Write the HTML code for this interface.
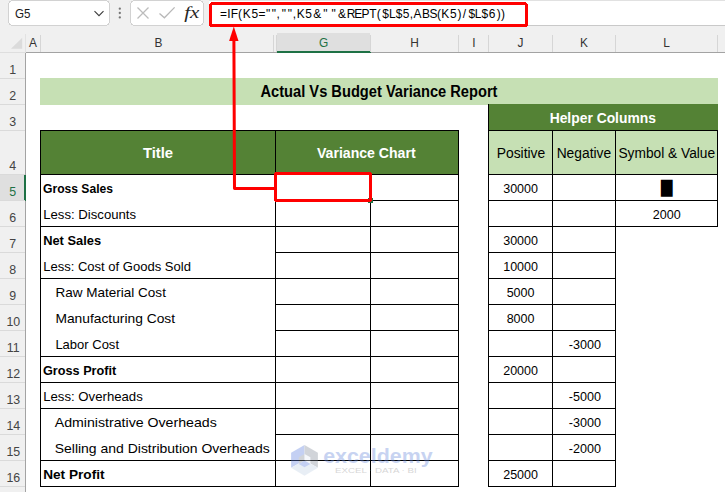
<!DOCTYPE html>
<html lang="en">
<head>
<meta charset="utf-8">
<title>Actual Vs Budget Variance Report</title>
<style>
html,body{margin:0;padding:0;background:#fff;}
body{width:725px;height:492px;overflow:hidden;}
svg{display:block;font-family:"Liberation Sans", sans-serif;}
svg rect{shape-rendering:crispEdges;}
svg text{white-space:pre;}
</style>
</head>
<body>
<svg width="725" height="492" viewBox="0 0 725 492">
<rect x="0" y="0" width="725" height="492" fill="#ffffff" />
<rect x="0" y="0" width="725" height="53" fill="#f0f0f0" />
<rect x="209" y="1" width="516" height="24" fill="#ffffff" />
<rect x="209" y="0" width="516" height="1" fill="#e1e1e1" />
<rect x="209" y="25" width="516" height="1" fill="#c9c9c9" />
<rect x="8.5" y="0.5" width="101" height="25" rx="4.5" fill="#fff" stroke="#d2d2d2"/>
<rect x="130.5" y="0.5" width="73" height="25" rx="4.5" fill="#fff" stroke="#d2d2d2"/>
<text x="15" y="18" font-size="12.2" font-weight="normal" fill="#1a1a1a" text-anchor="start" textLength="15.5" lengthAdjust="spacingAndGlyphs" >G5</text>
<path d="M94.5 11.2 L99 15.7 L103.5 11.2" fill="none" stroke="#3b3b3b" stroke-width="1.1"/>
<circle cx="119.8" cy="8.7" r="1.15" fill="#767676"/>
<circle cx="119.8" cy="13.0" r="1.15" fill="#767676"/>
<circle cx="119.8" cy="17.4" r="1.15" fill="#767676"/>
<path d="M137.5 7.5 L148.5 18.5 M148.5 7.5 L137.5 18.5" fill="none" stroke="#bcbcbc" stroke-width="1.3"/>
<path d="M159.5 13.4 L164.4 17.8 L174.6 7.4" fill="none" stroke="#b8b8b8" stroke-width="1.3"/>
<text x="184.2" y="17.9" font-size="16.5" font-weight="normal" fill="#262626" text-anchor="start" textLength="15.2" lengthAdjust="spacingAndGlyphs" font-family='"Liberation Serif", serif' font-style="italic">fx</text>
<text transform="scale(0.92,1)" x="239.2 246.94 250.84 258.83 263.79 273.25 280.99 289.05 295.41 300.64 306.23 312.75 318.3 322.65 331.72 340.54 351.23 355.43 360.41 367.44 376.92 385.08 392.87 401.25 409.48 415.55 422.81 430.12 437.81 445.42 449.41 458.68 466.75 474.97 479.66 489.06 497.39 503.09 509.14 516.12 523.38 531.12 539.83 544.56" y="18" font-size="13" fill="#000">=IF(K5=&quot;&quot;,&quot;&quot;,K5&amp;&quot; &quot;&amp;REPT($L$5,ABS(K5)/$L$6))</text>
<rect x="277" y="33" width="93" height="18" fill="#dfdfdf" />
<rect x="277" y="51" width="94" height="2" fill="#1e7145" />
<text x="33.0" y="47" font-size="11.9" font-weight="normal" fill="#333" text-anchor="middle" >A</text>
<text x="158.4" y="47" font-size="11.9" font-weight="normal" fill="#333" text-anchor="middle" >B</text>
<text x="323.5" y="47" font-size="11.9" font-weight="normal" fill="#1e7145" text-anchor="middle" >G</text>
<text x="414.5" y="47" font-size="11.9" font-weight="normal" fill="#333" text-anchor="middle" >H</text>
<text x="474.0" y="47" font-size="11.9" font-weight="normal" fill="#333" text-anchor="middle" >I</text>
<text x="520.5" y="47" font-size="11.9" font-weight="normal" fill="#333" text-anchor="middle" >J</text>
<text x="584.0" y="47" font-size="11.9" font-weight="normal" fill="#333" text-anchor="middle" >K</text>
<text x="666.5" y="47" font-size="11.9" font-weight="normal" fill="#333" text-anchor="middle" >L</text>
<rect x="40" y="35" width="1" height="17" fill="#d6d6d6" />
<rect x="273" y="35" width="1" height="17" fill="#d6d6d6" />
<rect x="276" y="35" width="1" height="17" fill="#d6d6d6" />
<rect x="370" y="35" width="1" height="17" fill="#d6d6d6" />
<rect x="458" y="35" width="1" height="17" fill="#d6d6d6" />
<rect x="488" y="35" width="1" height="17" fill="#d6d6d6" />
<rect x="552" y="35" width="1" height="17" fill="#d6d6d6" />
<rect x="615" y="35" width="1" height="17" fill="#d6d6d6" />
<rect x="717" y="35" width="1" height="17" fill="#d6d6d6" />
<rect x="25" y="34" width="1" height="18" fill="#e2e2e2" />
<rect x="0" y="52" width="26" height="1" fill="#dedede" />
<rect x="26" y="52" width="251" height="1" fill="#a3a3a3" />
<rect x="371" y="52" width="354" height="1" fill="#a3a3a3" />
<rect x="0" y="53" width="26" height="439" fill="#f0f0f0" />
<rect x="0" y="175" width="24" height="25" fill="#dfdfdf" />
<rect x="24" y="175" width="2" height="26" fill="#1e7145" />
<rect x="0" y="78" width="25" height="1" fill="#dadada" />
<rect x="0" y="104" width="25" height="1" fill="#dadada" />
<rect x="0" y="130" width="25" height="1" fill="#dadada" />
<rect x="0" y="174" width="25" height="1" fill="#dadada" />
<rect x="0" y="200" width="25" height="1" fill="#dadada" />
<rect x="0" y="226" width="25" height="1" fill="#dadada" />
<rect x="0" y="252" width="25" height="1" fill="#dadada" />
<rect x="0" y="278" width="25" height="1" fill="#dadada" />
<rect x="0" y="304" width="25" height="1" fill="#dadada" />
<rect x="0" y="330" width="25" height="1" fill="#dadada" />
<rect x="0" y="356" width="25" height="1" fill="#dadada" />
<rect x="0" y="382" width="25" height="1" fill="#dadada" />
<rect x="0" y="408" width="25" height="1" fill="#dadada" />
<rect x="0" y="434" width="25" height="1" fill="#dadada" />
<rect x="0" y="460" width="25" height="1" fill="#dadada" />
<rect x="0" y="486" width="25" height="1" fill="#dadada" />
<rect x="25" y="53" width="1" height="122" fill="#a3a3a3" />
<rect x="25" y="201" width="1" height="291" fill="#a3a3a3" />
<path d="M22.2 37.8 L22.2 48.7 L11 48.7 Z" fill="#dbdbdb"/>
<text x="12.7" y="73.5" font-size="12.4" font-weight="normal" fill="#444" text-anchor="middle" >1</text>
<text x="12.7" y="99.5" font-size="12.4" font-weight="normal" fill="#444" text-anchor="middle" >2</text>
<text x="12.7" y="125.5" font-size="12.4" font-weight="normal" fill="#444" text-anchor="middle" >3</text>
<text x="12.7" y="169.5" font-size="12.4" font-weight="normal" fill="#444" text-anchor="middle" >4</text>
<text x="12.7" y="195.5" font-size="12.4" font-weight="normal" fill="#1e7145" text-anchor="middle" >5</text>
<text x="12.7" y="221.5" font-size="12.4" font-weight="normal" fill="#444" text-anchor="middle" >6</text>
<text x="12.7" y="247.5" font-size="12.4" font-weight="normal" fill="#444" text-anchor="middle" >7</text>
<text x="12.7" y="273.5" font-size="12.4" font-weight="normal" fill="#444" text-anchor="middle" >8</text>
<text x="12.7" y="299.5" font-size="12.4" font-weight="normal" fill="#444" text-anchor="middle" >9</text>
<text x="13.3" y="325.5" font-size="12.4" font-weight="normal" fill="#444" text-anchor="middle" >10</text>
<text x="13.3" y="351.5" font-size="12.4" font-weight="normal" fill="#444" text-anchor="middle" >11</text>
<text x="13.3" y="377.5" font-size="12.4" font-weight="normal" fill="#444" text-anchor="middle" >12</text>
<text x="13.3" y="403.5" font-size="12.4" font-weight="normal" fill="#444" text-anchor="middle" >13</text>
<text x="13.3" y="429.5" font-size="12.4" font-weight="normal" fill="#444" text-anchor="middle" >14</text>
<text x="13.3" y="455.5" font-size="12.4" font-weight="normal" fill="#444" text-anchor="middle" >15</text>
<text x="13.3" y="481.5" font-size="12.4" font-weight="normal" fill="#444" text-anchor="middle" >16</text>
<rect x="40" y="78" width="678" height="27" fill="#c6e0b4" />
<text x="379" y="96.8" font-size="15.6" font-weight="bold" fill="#000" text-anchor="middle" textLength="237" lengthAdjust="spacingAndGlyphs" >Actual Vs Budget Variance Report</text>
<rect x="40" y="130" width="419" height="45" fill="#000" />
<rect x="41" y="131" width="234" height="43" fill="#548235" />
<rect x="276" y="131" width="182" height="43" fill="#548235" />
<text x="158" y="157.8" font-size="14.2" font-weight="bold" fill="#fff" text-anchor="middle" textLength="30.2" lengthAdjust="spacingAndGlyphs" >Title</text>
<text x="366.3" y="157.6" font-size="14.2" font-weight="bold" fill="#fff" text-anchor="middle" textLength="98.7" lengthAdjust="spacingAndGlyphs" >Variance Chart</text>
<rect x="40" y="174" width="1" height="313" fill="#000" />
<rect x="275" y="174" width="1" height="313" fill="#000" />
<rect x="370" y="174" width="1" height="313" fill="#000" />
<rect x="458" y="174" width="1" height="313" fill="#000" />
<rect x="40" y="226" width="236" height="1" fill="#000" />
<rect x="40" y="278" width="236" height="1" fill="#000" />
<rect x="40" y="356" width="236" height="1" fill="#000" />
<rect x="40" y="382" width="236" height="1" fill="#000" />
<rect x="40" y="408" width="236" height="1" fill="#000" />
<rect x="40" y="460" width="236" height="1" fill="#000" />
<rect x="40" y="486" width="236" height="1" fill="#000" />
<rect x="275" y="200" width="184" height="1" fill="#000" />
<rect x="275" y="226" width="184" height="1" fill="#000" />
<rect x="275" y="252" width="184" height="1" fill="#000" />
<rect x="275" y="278" width="184" height="1" fill="#000" />
<rect x="275" y="304" width="184" height="1" fill="#000" />
<rect x="275" y="330" width="184" height="1" fill="#000" />
<rect x="275" y="356" width="184" height="1" fill="#000" />
<rect x="275" y="382" width="184" height="1" fill="#000" />
<rect x="275" y="408" width="184" height="1" fill="#000" />
<rect x="275" y="434" width="184" height="1" fill="#000" />
<rect x="275" y="460" width="184" height="1" fill="#000" />
<rect x="275" y="486" width="184" height="1" fill="#000" />
<text x="43.0" y="192.55" font-size="13" font-weight="bold" fill="#000" text-anchor="start" textLength="70.0" lengthAdjust="spacingAndGlyphs" >Gross Sales</text>
<text x="43.2" y="218.55" font-size="13" font-weight="normal" fill="#000" text-anchor="start" textLength="92.9" lengthAdjust="spacingAndGlyphs" >Less: Discounts</text>
<text x="43.2" y="244.55" font-size="13" font-weight="bold" fill="#000" text-anchor="start" textLength="57.9" lengthAdjust="spacingAndGlyphs" >Net Sales</text>
<text x="43.2" y="270.55" font-size="13" font-weight="normal" fill="#000" text-anchor="start" textLength="147.7" lengthAdjust="spacingAndGlyphs" >Less: Cost of Goods Sold</text>
<text x="55.4" y="296.55" font-size="13" font-weight="normal" fill="#000" text-anchor="start" textLength="110.5" lengthAdjust="spacingAndGlyphs" >Raw Material Cost</text>
<text x="55.4" y="322.55" font-size="13" font-weight="normal" fill="#000" text-anchor="start" textLength="119.7" lengthAdjust="spacingAndGlyphs" >Manufacturing Cost</text>
<text x="55.4" y="348.55" font-size="13" font-weight="normal" fill="#000" text-anchor="start" textLength="63.6" lengthAdjust="spacingAndGlyphs" >Labor Cost</text>
<text x="43.0" y="374.55" font-size="13" font-weight="bold" fill="#000" text-anchor="start" textLength="73.2" lengthAdjust="spacingAndGlyphs" >Gross Profit</text>
<text x="43.2" y="400.55" font-size="13" font-weight="normal" fill="#000" text-anchor="start" textLength="99.6" lengthAdjust="spacingAndGlyphs" >Less: Overheads</text>
<text x="54.7" y="426.55" font-size="13" font-weight="normal" fill="#000" text-anchor="start" textLength="162.1" lengthAdjust="spacingAndGlyphs" >Administrative Overheads</text>
<text x="54.7" y="452.55" font-size="13" font-weight="normal" fill="#000" text-anchor="start" textLength="215.1" lengthAdjust="spacingAndGlyphs" >Selling and Distribution Overheads</text>
<text x="43.2" y="478.55" font-size="13" font-weight="bold" fill="#000" text-anchor="start" textLength="61.3" lengthAdjust="spacingAndGlyphs" >Net Profit</text>
<rect x="488" y="104" width="1" height="27" fill="#000" />
<rect x="489" y="104" width="229" height="26" fill="#548235" />
<rect x="488" y="130" width="230" height="45" fill="#000" />
<rect x="489" y="131" width="63" height="43" fill="#c6e0b4" />
<rect x="553" y="131" width="62" height="43" fill="#c6e0b4" />
<rect x="616" y="131" width="101" height="43" fill="#c6e0b4" />
<text x="602.8" y="123.2" font-size="14.2" font-weight="bold" fill="#fff" text-anchor="middle" textLength="106.3" lengthAdjust="spacingAndGlyphs" >Helper Columns</text>
<text x="521" y="158" font-size="14" font-weight="normal" fill="#000" text-anchor="middle" textLength="48.6" lengthAdjust="spacingAndGlyphs" >Positive</text>
<text x="583.9" y="158" font-size="14" font-weight="normal" fill="#000" text-anchor="middle" textLength="54.5" lengthAdjust="spacingAndGlyphs" >Negative</text>
<text x="666.8" y="158" font-size="14" font-weight="normal" fill="#000" text-anchor="middle" textLength="96.7" lengthAdjust="spacingAndGlyphs" >Symbol &amp; Value</text>
<rect x="488" y="174" width="1" height="313" fill="#000" />
<rect x="552" y="174" width="1" height="313" fill="#000" />
<rect x="615" y="174" width="1" height="313" fill="#000" />
<rect x="717" y="174" width="1" height="53" fill="#000" />
<rect x="488" y="200" width="128" height="1" fill="#000" />
<rect x="488" y="226" width="128" height="1" fill="#000" />
<rect x="488" y="252" width="128" height="1" fill="#000" />
<rect x="488" y="278" width="128" height="1" fill="#000" />
<rect x="488" y="304" width="128" height="1" fill="#000" />
<rect x="488" y="330" width="128" height="1" fill="#000" />
<rect x="488" y="356" width="128" height="1" fill="#000" />
<rect x="488" y="382" width="128" height="1" fill="#000" />
<rect x="488" y="408" width="128" height="1" fill="#000" />
<rect x="488" y="434" width="128" height="1" fill="#000" />
<rect x="488" y="460" width="128" height="1" fill="#000" />
<rect x="488" y="486" width="128" height="1" fill="#000" />
<rect x="615" y="200" width="103" height="1" fill="#000" />
<rect x="615" y="226" width="103" height="1" fill="#000" />
<text x="520.6" y="192.55" font-size="13" font-weight="normal" fill="#000" text-anchor="middle" textLength="34.8" lengthAdjust="spacingAndGlyphs" >30000</text>
<text x="520.6" y="244.55" font-size="13" font-weight="normal" fill="#000" text-anchor="middle" textLength="34.8" lengthAdjust="spacingAndGlyphs" >30000</text>
<text x="520.6" y="270.55" font-size="13" font-weight="normal" fill="#000" text-anchor="middle" textLength="34.8" lengthAdjust="spacingAndGlyphs" >10000</text>
<text x="520.6" y="296.55" font-size="13" font-weight="normal" fill="#000" text-anchor="middle" textLength="27.9" lengthAdjust="spacingAndGlyphs" >5000</text>
<text x="520.6" y="322.55" font-size="13" font-weight="normal" fill="#000" text-anchor="middle" textLength="27.9" lengthAdjust="spacingAndGlyphs" >8000</text>
<text x="520.6" y="374.55" font-size="13" font-weight="normal" fill="#000" text-anchor="middle" textLength="34.8" lengthAdjust="spacingAndGlyphs" >20000</text>
<text x="520.6" y="478.55" font-size="13" font-weight="normal" fill="#000" text-anchor="middle" textLength="34.8" lengthAdjust="spacingAndGlyphs" >25000</text>
<text x="584.8" y="348.55" font-size="13" font-weight="normal" fill="#000" text-anchor="middle" textLength="32.2" lengthAdjust="spacingAndGlyphs" >-3000</text>
<text x="584.8" y="400.55" font-size="13" font-weight="normal" fill="#000" text-anchor="middle" textLength="32.2" lengthAdjust="spacingAndGlyphs" >-5000</text>
<text x="584.8" y="426.55" font-size="13" font-weight="normal" fill="#000" text-anchor="middle" textLength="32.2" lengthAdjust="spacingAndGlyphs" >-3000</text>
<text x="584.8" y="452.55" font-size="13" font-weight="normal" fill="#000" text-anchor="middle" textLength="32.2" lengthAdjust="spacingAndGlyphs" >-2000</text>
<text x="666.8" y="218.8" font-size="13" font-weight="normal" fill="#000" text-anchor="middle" textLength="27.9" lengthAdjust="spacingAndGlyphs" >2000</text>
<text x="661" y="193.2" font-size="14.3" font-weight="normal" fill="#000" text-anchor="start" textLength="11.5" lengthAdjust="spacingAndGlyphs" font-family='"DejaVu Sans", "Liberation Sans", sans-serif' >█</text>
<g opacity="0.35">
<path d="M304.5 445.1 L291.1 452.8 L291.1 467.7 L304.5 460.3 Z" fill="#597cdd"/>
<path d="M304.5 445.1 L317.9 452.8 L317.9 467.7 L304.5 460.3 Z" fill="#7e8795"/>
<path d="M291.1 467.7 L304.5 475.8 L317.9 467.7 L304.5 460.3 Z" fill="#c0d1e5"/>
<path d="M304.5 454 L298.8 457.3 L298.8 464 L304.5 460.6 Z" fill="#7e8795"/>
<path d="M304.5 454 L310.4 457.3 L310.4 464 L304.5 460.6 Z" fill="#e4ebf5"/>
<path d="M298.8 464 L304.5 467.3 L310.4 464 L304.5 460.6 Z" fill="#597cdd"/>
<text x="323.2" y="462.7" font-size="20.5" font-weight="bold" fill="#6284da" text-anchor="start" textLength="109.4" lengthAdjust="spacingAndGlyphs" >exceldemy</text>
<text x="335" y="473" font-size="7.6" font-weight="normal" fill="#8a8a8a" text-anchor="start" textLength="81.7" lengthAdjust="spacingAndGlyphs" >EXCEL · DATA · BI</text>
</g>
<rect x="368" y="198" width="5" height="5" fill="#1e7145" />
<rect x="275.5" y="173.5" width="95" height="27" rx="1" fill="none" stroke="#ff0000" stroke-width="3"/>
<path d="M233.9 40 L234.5 188.5 L275 188.5" fill="none" stroke="#ff0000" stroke-width="3" stroke-linejoin="round"/>
<path d="M233.8 26.5 L238.5 41 L229.1 41 Z" fill="#ff0000"/>
<rect x="210.5" y="3.5" width="316" height="22" rx="2" fill="none" stroke="#ff0000" stroke-width="3"/>
</svg>
</body>
</html>
